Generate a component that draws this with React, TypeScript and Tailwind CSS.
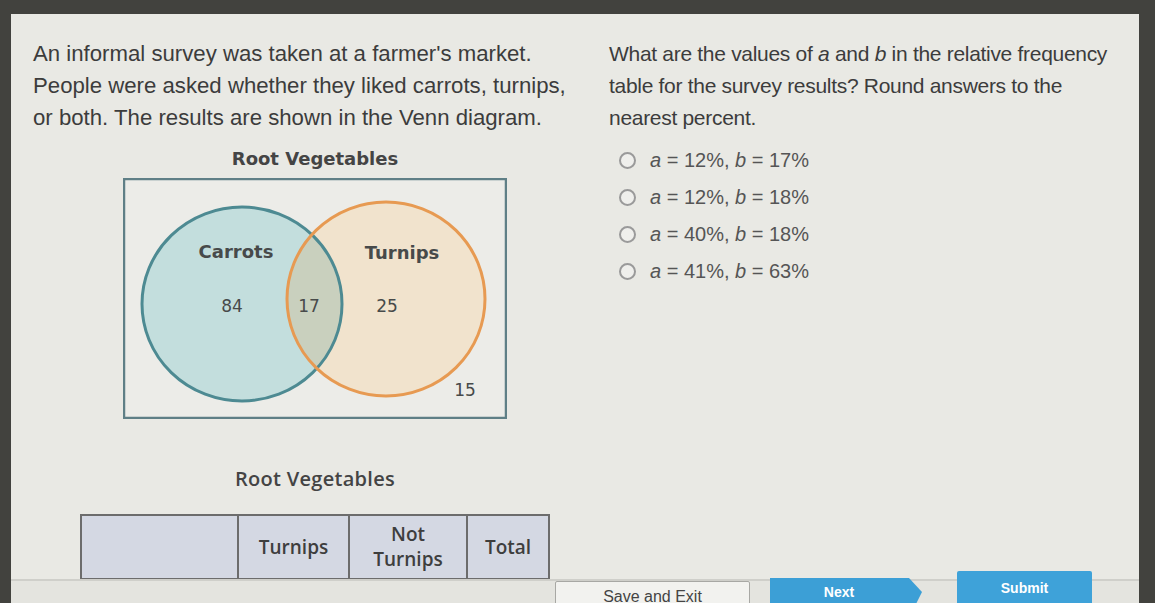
import React from 'react';

const options = [
  { a: '12%', b: '17%' },
  { a: '12%', b: '18%' },
  { a: '40%', b: '18%' },
  { a: '41%', b: '63%' },
];

const VennDiagram: React.FC = () => (
  <svg width="384" height="241" viewBox="0 0 384 241" className="block">
    <defs>
      <clipPath id="blueClip">
        <ellipse cx="119" cy="126" rx="100" ry="97" />
      </clipPath>
    </defs>
    <rect x="1" y="1" width="382" height="239" fill="#ecece8" stroke="#5f7f86" strokeWidth="2.5" />
    <ellipse cx="119" cy="126" rx="100" ry="97" fill="#c3dedd" />
    <ellipse cx="263" cy="121" rx="99" ry="97" fill="#f1e3cd" />
    <ellipse cx="263" cy="121" rx="99" ry="97" fill="#c9d0be" clipPath="url(#blueClip)" />
    <ellipse cx="119" cy="126" rx="100" ry="97" fill="none" stroke="#4d8a92" strokeWidth="3" />
    <ellipse cx="263" cy="121" rx="99" ry="97" fill="none" stroke="#e79a52" strokeWidth="3" />
    <g fontFamily="'DejaVu Sans', Verdana, sans-serif" fill="#474a4a">
      <text x="113" y="80" fontSize="18" fontWeight="700" textAnchor="middle">Carrots</text>
      <text x="279" y="81" fontSize="18" fontWeight="700" textAnchor="middle">Turnips</text>
      <text x="109" y="134" fontSize="17" textAnchor="middle">84</text>
      <text x="186" y="134" fontSize="17" textAnchor="middle">17</text>
      <text x="264" y="134" fontSize="17" textAnchor="middle">25</text>
      <text x="342" y="218" fontSize="17" textAnchor="middle">15</text>
    </g>
  </svg>
);

export default function App() {
  return (
    <div className="w-[1155px] h-[603px] overflow-hidden bg-[#42423e] pt-[14px] pl-[11px] pr-[16px]">
      <div className="h-full bg-[#e9e9e4] flex flex-col font-['Liberation_Sans',Arial,sans-serif] text-[#3c3c3c]">
        <div className="flex-1 flex overflow-hidden">
          {/* left column */}
          <div className="w-[586px] pl-[22px] pt-[24px] flex flex-col">
            <p className="text-[22.2px] leading-[32px]">
              An informal survey was taken at a farmer's market.
              <br />
              People were asked whether they liked carrots, turnips,
              <br />
              or both. The results are shown in the Venn diagram.
            </p>
            <div className="ml-[90px] mt-[13px] w-[384px] flex flex-col items-center">
              <div className="font-['DejaVu_Sans',Verdana,sans-serif] text-[18px] font-bold leading-[24px] text-[#444] mb-[7px]">
                Root Vegetables
              </div>
              <VennDiagram />
            </div>
            <div className="ml-[47px] mt-[48px] w-[470px] flex flex-col items-center">
              <div className="font-['Open_Sans',sans-serif] text-[20px] font-semibold leading-[24px] tracking-[0.3px] text-[#444] mb-[23px]">
                Root Vegetables
              </div>
              <table className="w-[470px] h-[66px] border-collapse bg-[#d4d8e3] font-['Open_Sans',sans-serif] text-[19px] font-semibold text-[#3e3e3e]">
                <tbody>
                  <tr>
                    <td className="w-[157px] border-2 border-[#6c6c6c]"></td>
                    <td className="w-[111px] border-2 border-[#6c6c6c] text-center">Turnips</td>
                    <td className="w-[118px] border-2 border-[#6c6c6c] text-center leading-[25px]">
                      <div>Not</div>
                      <div>Turnips</div>
                    </td>
                    <td className="border-2 border-[#6c6c6c] text-center">Total</td>
                  </tr>
                </tbody>
              </table>
            </div>
          </div>
          {/* right column */}
          <div className="flex-1 pl-[12px] pt-[24px]">
            <p className="text-[21px] leading-[32px] tracking-[-0.3px]">
              What are the values of <i>a</i> and <i>b</i> in the relative frequency
              <br />
              table for the survey results? Round answers to the
              <br />
              nearest percent.
            </p>
            <div className="mt-[14px] flex flex-col gap-[13px] pl-[10px]">
              {options.map((o, i) => (
                <label key={i} className="flex items-center gap-[14px] text-[20px] leading-[24px] text-[#555]">
                  <span className="w-[17px] h-[17px] rounded-full border-2 border-[#9a9a9a] bg-[#efefec]" />
                  <span>
                    <i>a</i> = {o.a}, <i>b</i> = {o.b}
                  </span>
                </label>
              ))}
            </div>
          </div>
        </div>
        {/* footer */}
        <div className="h-[24px] border-t-2 border-[#cfcfca] bg-[#e4e4df] flex items-start pl-[544px] gap-[20px]">
          <button className="w-[195px] h-[36px] bg-[#f2f2ef] border border-[#a8a8a4] rounded-[2px] text-[16px] text-[#444] pt-[5px] leading-[20px] flex justify-center items-start">
            Save and Exit
          </button>
          <div className="flex -mt-[3px]">
            <button className="w-[138px] h-[40px] bg-[#3c9fd6] text-white text-[14px] font-bold leading-[20px] pt-[4px] flex justify-center items-start">
              Next
            </button>
            <svg width="14" height="40" viewBox="0 0 14 40" className="block">
              <polygon points="0,0 1,0 14,14 1,40 0,40" fill="#3c9fd6" />
            </svg>
          </div>
          <button className="ml-[15px] -mt-[10px] w-[135px] h-[44px] bg-[#3ea2d9] rounded-[2px] text-white text-[14px] font-bold leading-[20px] pt-[7px] flex justify-center items-start">
            Submit
          </button>
        </div>
      </div>
    </div>
  );
}
